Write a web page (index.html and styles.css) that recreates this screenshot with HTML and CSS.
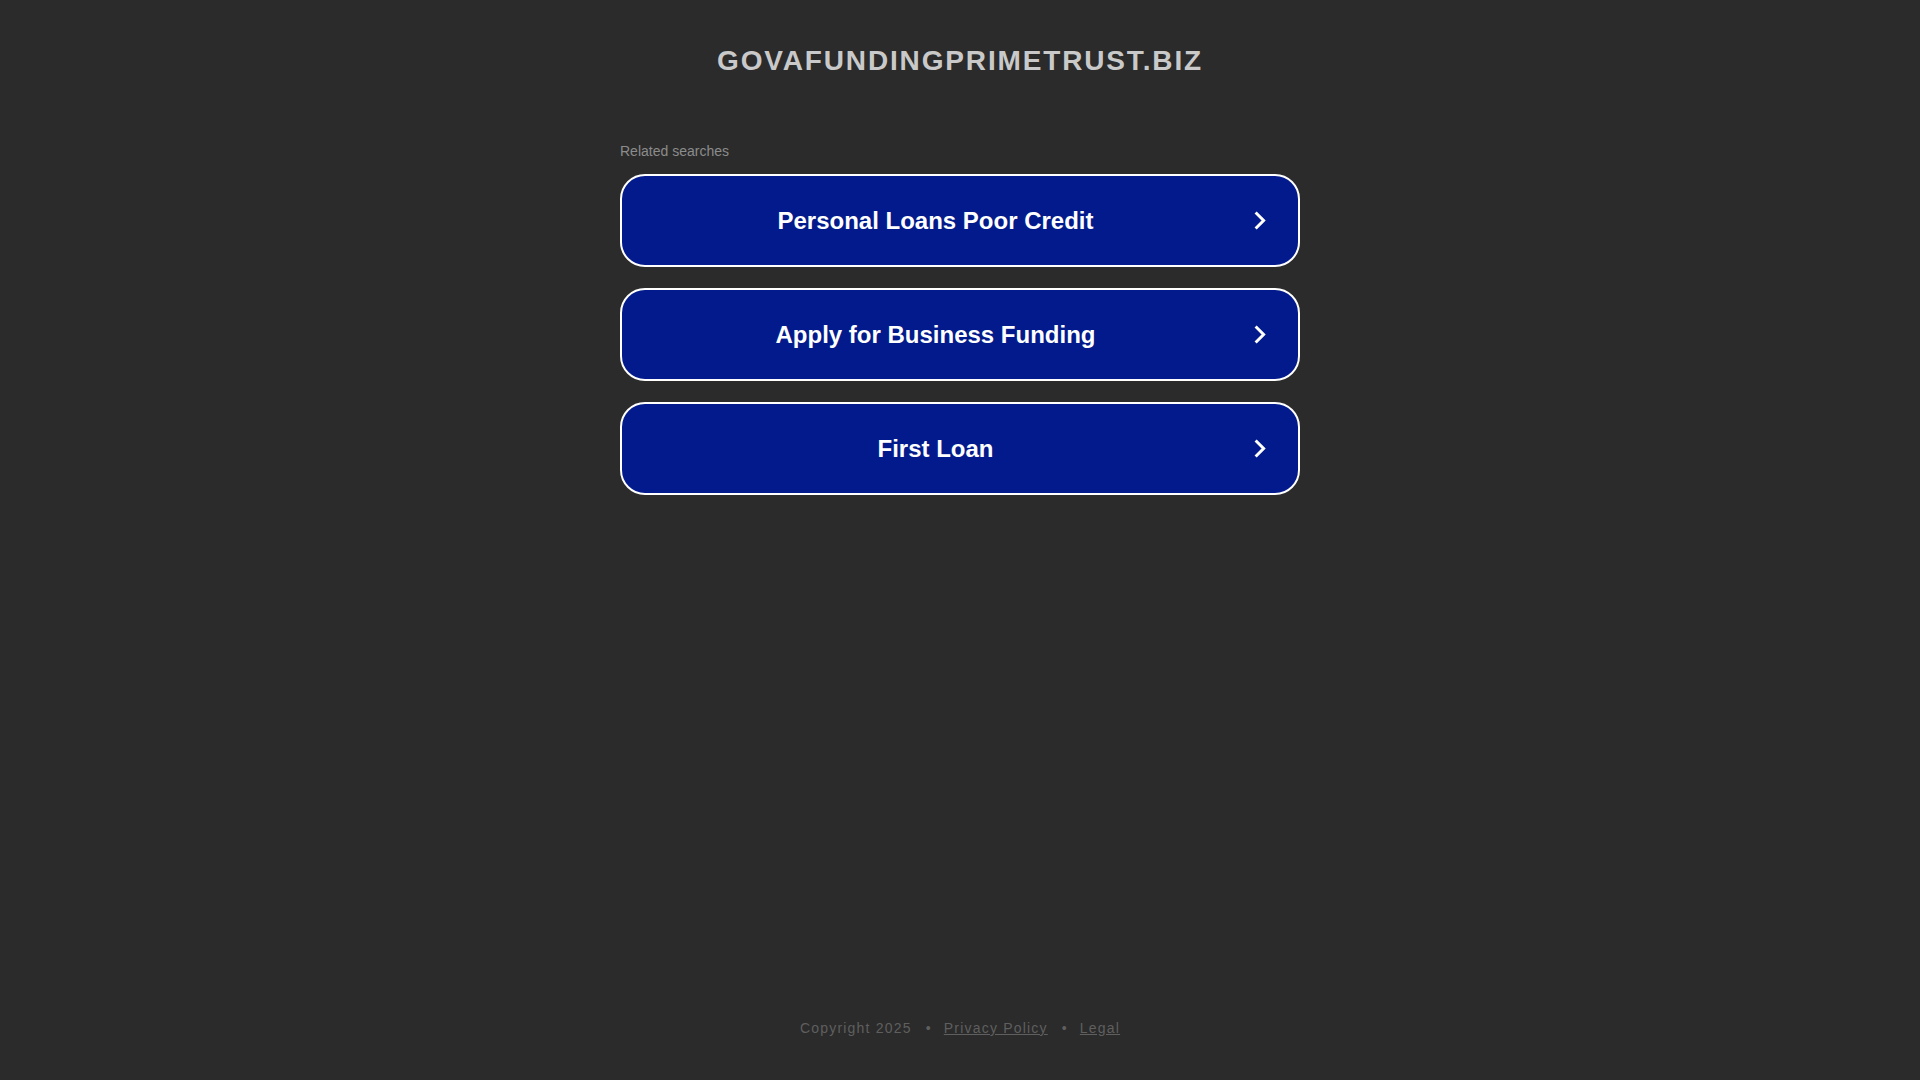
FILE: index.html
```html
<!DOCTYPE html>
<html lang="en">
<head>
<meta charset="utf-8">
<title>govafundingprimetrust.biz</title>
<link rel="stylesheet" href="styles.css">
</head>
<body>
<div class="page">
  <main class="main">
    <h1 class="domain">GOVAFUNDINGPRIMETRUST.BIZ</h1>
    <section class="related">
      <div class="related-title">Related searches</div>
      <div class="list">
        <a class="btn" href="#"><span class="label">Personal Loans Poor Credit</span><svg class="chev" viewBox="0 0 12 19" width="12" height="19"><path d="M1.6 1.5 L9.6 9.5 L1.6 17.5" fill="none" stroke="#ffffff" stroke-width="3"/></svg></a>
        <a class="btn" href="#"><span class="label">Apply for Business Funding</span><svg class="chev" viewBox="0 0 12 19" width="12" height="19"><path d="M1.6 1.5 L9.6 9.5 L1.6 17.5" fill="none" stroke="#ffffff" stroke-width="3"/></svg></a>
        <a class="btn" href="#"><span class="label">First Loan</span><svg class="chev" viewBox="0 0 12 19" width="12" height="19"><path d="M1.6 1.5 L9.6 9.5 L1.6 17.5" fill="none" stroke="#ffffff" stroke-width="3"/></svg></a>
      </div>
    </section>
  </main>
  <footer class="footer">
    <span>Copyright 2025</span><span class="sep">•</span><a href="#">Privacy Policy</a><span class="sep">•</span><a href="#">Legal</a>
  </footer>
</div>
</body>
</html>
```
FILE: styles.css
```css
html, body {
  margin: 0;
  padding: 0;
  background: #2b2b2b;
  font-family: "Liberation Sans", Arial, sans-serif;
}
.page {
  min-height: 100vh;
  display: flex;
  flex-direction: column;
}
.main {
  flex: 1;
  display: flex;
  flex-direction: column;
  align-items: center;
}
.domain {
  margin: 0;
  padding-top: 45px;
  font-size: 28px;
  line-height: 32px;
  font-weight: bold;
  letter-spacing: 1.85px;
  color: #c9c9c9;
  text-align: center;
}
.related {
  width: 680px;
  margin-top: 66px;
}
.related-title {
  font-size: 14px;
  line-height: 16px;
  color: #8c8c8c;
  margin-bottom: 15px;
}
.list {
  display: flex;
  flex-direction: column;
  gap: 21px;
}
.btn {
  box-sizing: border-box;
  height: 93px;
  display: flex;
  align-items: center;
  padding-right: 32px;
  background: #021a8b;
  border: 2px solid #ffffff;
  border-radius: 25px;
  text-decoration: none;
  color: #ffffff;
}
.label {
  flex: 1;
  text-align: center;
  font-size: 24px;
  font-weight: bold;
  color: #ffffff;
  padding-top: 1px;
}
.chev {
  margin-left: 5px;
  flex: none;
}
.footer {
  display: flex;
  justify-content: center;
  align-items: center;
  padding-bottom: 44px;
  font-size: 14px;
  line-height: 16px;
  letter-spacing: 1.2px;
  color: #5f5f5f;
}
.footer a {
  color: #5f5f5f;
  text-decoration: underline;
}
.sep {
  margin: 0 12px 0 14px;
}
```
